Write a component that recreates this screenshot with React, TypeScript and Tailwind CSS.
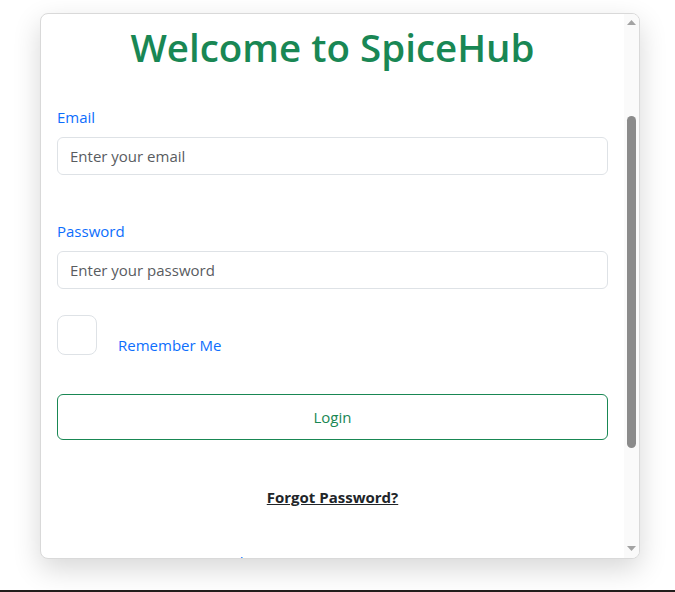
import { useLayoutEffect, useRef } from 'react'

const font = { fontFamily: '"Open Sans", "Noto Sans", sans-serif' }

const SpiceLogo = () => (
  <svg width="96" height="96" viewBox="0 0 96 96" fill="none">
    <circle cx="48" cy="48" r="44" stroke="#198754" strokeWidth="4" />
    <path d="M30 62c8-20 22-30 38-32-4 16-16 30-38 32z" fill="#198754" />
    <path d="M30 62c10-8 20-16 30-24" stroke="#fff" strokeWidth="2" />
  </svg>
)

const ScrollTrack = () => (
  <div className="flex w-[15px] shrink-0 flex-col items-center bg-[#fafafa]">
    <svg width="9" height="5" viewBox="0 0 9 5" className="mt-[6px]">
      <path d="M4.5 0L9 5H0z" fill="#a3a3a3" />
    </svg>
    <div className="mt-[91px] h-[332px] w-[9px] rounded-full bg-[#8b8b8b]" />
    <div className="flex-1" />
    <svg width="9" height="5" viewBox="0 0 9 5" className="mb-[7px]">
      <path d="M0 0H9L4.5 5z" fill="#a3a3a3" />
    </svg>
  </div>
)

export default function App() {
  const scrollRef = useRef<HTMLDivElement>(null)

  // the card is shown part way scrolled down
  useLayoutEffect(() => {
    if (scrollRef.current) scrollRef.current.scrollTop = 144
  }, [])

  return (
    <div className="min-h-[592px] bg-white text-[15px]" style={font}>
      <div className="ml-[40px] mt-[13px] flex h-[546px] w-[600px] overflow-hidden rounded-lg border border-[#d9d9d9] bg-white shadow-[0_10px_28px_rgba(0,0,0,0.16)]">
        <div ref={scrollRef} className="min-w-0 flex-1 overflow-hidden">
          <div className="px-4 pb-[69px] pt-4">
            <div className="flex h-[137px] items-center justify-center">
              <SpiceLogo />
            </div>

            <h1 className="text-center text-[38.5px] font-semibold leading-[48px] text-[#198754]">Welcome to SpiceHub</h1>

            <form className="mt-[34px]" onSubmit={(e) => e.preventDefault()}>
              <div>
                <label htmlFor="email" className="mb-2 block leading-6 text-[#0d6efd]">
                  Email
                </label>
                <input
                  id="email"
                  type="email"
                  placeholder="Enter your email"
                  className="block h-[38px] w-full rounded-md border border-[#dee2e6] px-3 text-[15px] text-[#212529] outline-none placeholder:text-[#595c5f]"
                />
              </div>

              <div className="mt-[44px]">
                <label htmlFor="password" className="mb-2 block leading-6 text-[#0d6efd]">
                  Password
                </label>
                <input
                  id="password"
                  type="password"
                  placeholder="Enter your password"
                  className="block h-[38px] w-full rounded-md border border-[#dee2e6] px-3 text-[15px] text-[#212529] outline-none placeholder:text-[#595c5f]"
                />
              </div>

              <div className="mt-[26px] flex items-end gap-[21px]">
                <input
                  id="remember"
                  type="checkbox"
                  className="h-10 w-10 appearance-none rounded-lg border border-[#dee2e6] bg-white"
                />
                <label htmlFor="remember" className="mb-[-2px] leading-6 text-[#0d6efd]">
                  Remember Me
                </label>
              </div>

              <button
                type="submit"
                className="mt-[39px] block h-[46px] w-full rounded-md border border-[#198754] text-[15px] text-[#198754]"
              >
                Login
              </button>
            </form>

            <div className="mt-[45px] text-center leading-6">
              <a href="#" className="font-bold text-[#212529] underline">
                Forgot Password?
              </a>
            </div>

            <div className="mt-[41px] flex gap-[45px] pl-[141px] leading-6 text-[#0d6efd]">
              <a href="#">Don't have an account?</a>
              <a href="#">Sign Up</a>
            </div>

            <p className="mt-12 text-center text-sm leading-6 text-[#6c757d]">© 2024 SpiceHub. All rights reserved.</p>
          </div>
        </div>
        <ScrollTrack />
      </div>
      <div className="mt-[31px] h-[2px] bg-[#221e1c]" />
    </div>
  )
}
